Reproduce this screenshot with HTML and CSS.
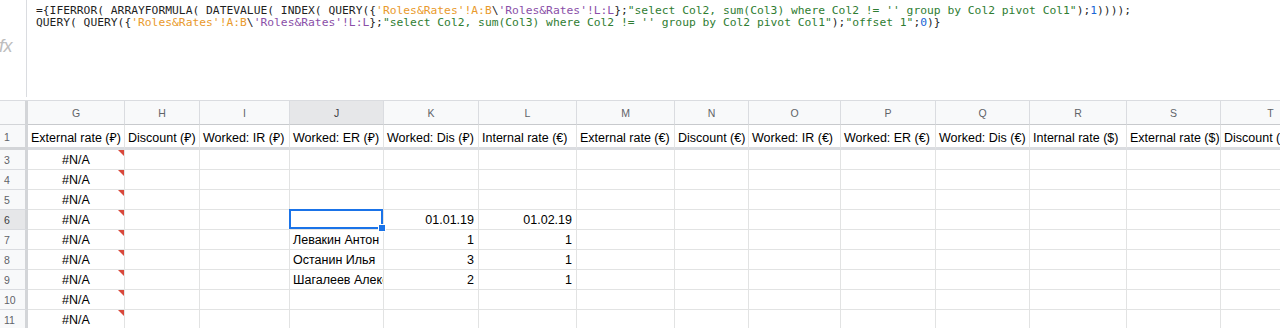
FILE: index.html
```html
<!DOCTYPE html>
<html lang="ru">
<head>
<meta charset="utf-8">
<title>Sheet</title>
<link rel="stylesheet" href="styles.css">
</head>
<body>
<div class="formula-bar">
  <div class="fx">fx</div>
  <div class="formula">
    <div class="fline">={IFERROR( ARRAYFORMULA( DATEVALUE( INDEX( QUERY({<span class="o">'Roles&amp;Rates'!A:B</span>\<span class="p">'Roles&amp;Rates'!L:L</span>};<span class="g">"select Col2, sum(Col3) where Col2 != '' group by Col2 pivot Col1"</span>);<span class="b">1</span>))));</div>
    <div class="fline">QUERY( QUERY({<span class="o">'Roles&amp;Rates'!A:B</span>\<span class="p">'Roles&amp;Rates'!L:L</span>};<span class="g">"select Col2, sum(Col3) where Col2 != '' group by Col2 pivot Col1"</span>);<span class="g">"offset 1"</span>;<span class="b">0</span>)}</div>
  </div>
</div>

<div class="grid">
  <!-- column headers -->
  <div class="corner"></div>
  <div class="ch">G</div><div class="ch">H</div><div class="ch">I</div><div class="ch ch-sel">J</div><div class="ch">K</div><div class="ch">L</div><div class="ch">M</div><div class="ch">N</div><div class="ch">O</div><div class="ch">P</div><div class="ch">Q</div><div class="ch">R</div><div class="ch">S</div><div class="ch">T</div>

  <!-- row 1 -->
  <div class="rh rh-frozen">1</div>
  <div class="c fz">External rate (₽)</div><div class="c fz">Discount (₽)</div><div class="c fz">Worked: IR (₽)</div><div class="c fz">Worked: ER (₽)</div><div class="c fz">Worked: Dis (₽)</div><div class="c fz">Internal rate (€)</div><div class="c fz">External rate (€)</div><div class="c fz">Discount (€)</div><div class="c fz">Worked: IR (€)</div><div class="c fz">Worked: ER (€)</div><div class="c fz">Worked: Dis (€)</div><div class="c fz">Internal rate ($)</div><div class="c fz">External rate ($)</div><div class="c fz">Discount ($)</div>

  <!-- row 3 -->
  <div class="rh">3</div>
  <div class="c na">#N/A<i class="err"></i></div><div class="c"></div><div class="c"></div><div class="c"></div><div class="c"></div><div class="c"></div><div class="c"></div><div class="c"></div><div class="c"></div><div class="c"></div><div class="c"></div><div class="c"></div><div class="c"></div><div class="c"></div>

  <!-- row 4 -->
  <div class="rh">4</div>
  <div class="c na">#N/A<i class="err"></i></div><div class="c"></div><div class="c"></div><div class="c"></div><div class="c"></div><div class="c"></div><div class="c"></div><div class="c"></div><div class="c"></div><div class="c"></div><div class="c"></div><div class="c"></div><div class="c"></div><div class="c"></div>

  <!-- row 5 -->
  <div class="rh">5</div>
  <div class="c na">#N/A<i class="err"></i></div><div class="c"></div><div class="c"></div><div class="c"></div><div class="c"></div><div class="c"></div><div class="c"></div><div class="c"></div><div class="c"></div><div class="c"></div><div class="c"></div><div class="c"></div><div class="c"></div><div class="c"></div>

  <!-- row 6 -->
  <div class="rh rh-sel">6</div>
  <div class="c na">#N/A<i class="err"></i></div><div class="c"></div><div class="c"></div><div class="c sel-cell"><i class="sel"><i class="handle"></i></i></div><div class="c r">01.01.19</div><div class="c r">01.02.19</div><div class="c"></div><div class="c"></div><div class="c"></div><div class="c"></div><div class="c"></div><div class="c"></div><div class="c"></div><div class="c"></div>

  <!-- row 7 -->
  <div class="rh">7</div>
  <div class="c na">#N/A<i class="err"></i></div><div class="c"></div><div class="c"></div><div class="c">Левакин Антон</div><div class="c r">1</div><div class="c r">1</div><div class="c"></div><div class="c"></div><div class="c"></div><div class="c"></div><div class="c"></div><div class="c"></div><div class="c"></div><div class="c"></div>

  <!-- row 8 -->
  <div class="rh">8</div>
  <div class="c na">#N/A<i class="err"></i></div><div class="c"></div><div class="c"></div><div class="c">Останин Илья</div><div class="c r">3</div><div class="c r">1</div><div class="c"></div><div class="c"></div><div class="c"></div><div class="c"></div><div class="c"></div><div class="c"></div><div class="c"></div><div class="c"></div>

  <!-- row 9 -->
  <div class="rh">9</div>
  <div class="c na">#N/A<i class="err"></i></div><div class="c"></div><div class="c"></div><div class="c">Шагалеев Алексей</div><div class="c r">2</div><div class="c r">1</div><div class="c"></div><div class="c"></div><div class="c"></div><div class="c"></div><div class="c"></div><div class="c"></div><div class="c"></div><div class="c"></div>

  <!-- row 10 -->
  <div class="rh">10</div>
  <div class="c na">#N/A<i class="err"></i></div><div class="c"></div><div class="c"></div><div class="c"></div><div class="c"></div><div class="c"></div><div class="c"></div><div class="c"></div><div class="c"></div><div class="c"></div><div class="c"></div><div class="c"></div><div class="c"></div><div class="c"></div>

  <!-- row 11 -->
  <div class="rh">11</div>
  <div class="c na">#N/A<i class="err"></i></div><div class="c"></div><div class="c"></div><div class="c"></div><div class="c"></div><div class="c"></div><div class="c"></div><div class="c"></div><div class="c"></div><div class="c"></div><div class="c"></div><div class="c"></div><div class="c"></div><div class="c"></div>
</div>
</body>
</html>
```

FILE: styles.css
```css
html, body {
  margin: 0;
  padding: 0;
  background: #ffffff;
}
body {
  width: 1280px;
  height: 328px;
  overflow: hidden;
  font-family: "Liberation Sans", "Noto Sans", "DejaVu Sans", Arial, sans-serif;
  color: #000;
}

.formula-bar {
  display: flex;
  height: 101px;
  box-sizing: border-box;
  border-bottom: 1px solid #dadce0;
}
.fx {
  width: 27px;
  flex: none;
  box-sizing: border-box;
  border-right: 1px solid #dadce0;
  margin-bottom: 3px;
  padding-top: 36px;
  font-family: "Liberation Sans", Arial, sans-serif;
  font-style: italic;
  font-size: 18px;
  color: #bdbdbd;
  letter-spacing: -0.5px;
  text-indent: -1px;
}
.formula {
  padding: 5px 0 0 9px;
  font-family: "DejaVu Sans Mono", monospace;
  font-size: 11.3px;
  line-height: 11.5px;
  color: #1f1f1f;
}
.fline {
  white-space: pre;
}
.o { color: #e99a2c; }
.p { color: #8a4fa8; }
.g { color: #2f7d32; }
.b { color: #1a66d6; }

.grid {
  display: grid;
  grid-template-columns: 28px 97px 75px 90px 94px 95px 98px 98px 74px 92px 95px 94px 97px 94px 100px;
  grid-template-rows: 24px 25px repeat(9, 20px);
  font-size: 12.5px;
}
.grid > div {
  box-sizing: border-box;
  white-space: nowrap;
  overflow: hidden;
  display: flex;
  align-items: center;
}

.corner {
  background: #f8f9fa;
  border-right: 3px solid #d3d5d8;
  border-bottom: 1px solid #d3d5d8;
}
.ch {
  background: #f8f9fa;
  border-right: 1px solid #dadce0;
  border-bottom: 1px solid #c8cacd;
  justify-content: center;
  color: #5f6368;
  font-size: 10.5px;
}
.ch-sel {
  background: #e6e7e9;
  color: #3c4043;
}
.rh {
  background: #f8f9fa;
  border-right: 3px solid #d3d5d8;
  border-bottom: 1px solid #dadce0;
  padding-left: 4px;
  color: #5f6368;
  font-size: 10.5px;
}
.rh-frozen {
  border-bottom: 3px solid #d3d5d8;
  padding-top: 2px;
}
.rh-sel {
  background: #e6e7e9;
  color: #3c4043;
}

.c {
  border-right: 1px solid #e2e3e3;
  border-bottom: 1px solid #e2e3e3;
  padding: 0 0 0 3px;
}
.c.fz {
  border-bottom: 3px solid #dadce0;
  padding-top: 3px;
}
.c.r {
  justify-content: flex-end;
  padding: 0 4px 0 0;
}
.c.na {
  justify-content: center;
  position: relative;
  padding: 1px 0 0 0;
}
.err {
  position: absolute;
  top: 0;
  right: 0;
  width: 0;
  height: 0;
  border-top: 6px solid #d9483b;
  border-left: 6px solid transparent;
}

.grid > .sel-cell {
  overflow: visible;
  position: relative;
}
.sel {
  position: absolute;
  left: -1px;
  top: -1px;
  right: 0;
  bottom: 0;
  border: 2px solid #1a73e8;
  z-index: 2;
}
.handle {
  position: absolute;
  right: -5px;
  bottom: -5px;
  width: 6px;
  height: 6px;
  background: #1a73e8;
  border: 1px solid #ffffff;
}
```
